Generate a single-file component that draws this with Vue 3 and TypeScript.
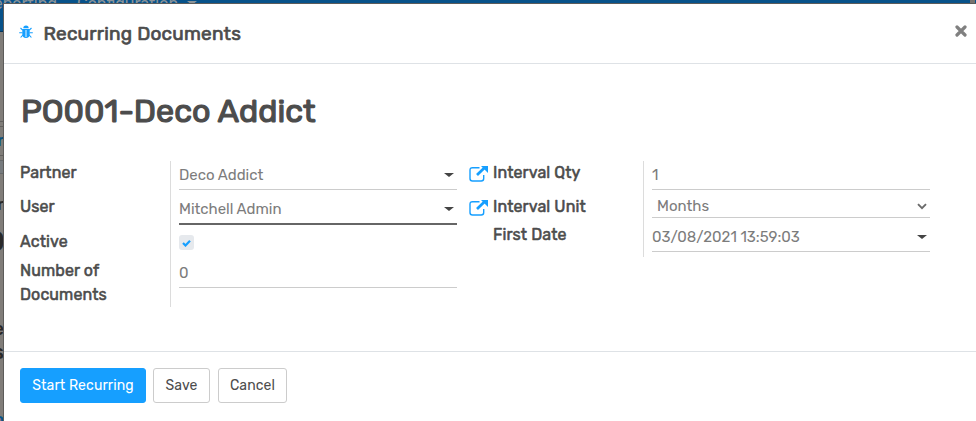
<script setup lang="ts">
import { ref } from 'vue'

const partner = ref('Deco Addict')
const user = ref('Mitchell Admin')
const active = ref(true)
const documents = ref('0')
const intervalQty = ref('1')
const intervalUnit = ref('Months')
const firstDate = ref('03/08/2021 13:59:03')
</script>

<template>
  <div class="screen">
    <div class="backdrop" aria-hidden="true">
      <div class="navbar">
        <span class="nav-a">Reporting</span>
        <span class="nav-b">Configuration</span>
        <i class="nav-caret"></i>
        <i class="nav-avatar"></i>
      </div>
      <i class="rule r1"></i>
      <i class="rule r2"></i>
      <i class="rule r3"></i>
      <i class="band"></i>
      <span class="bit b1">r</span>
      <span class="bit b2">r</span>
      <span class="bit b3">0</span>
      <span class="bit b4">e</span>
      <span class="bit b5">s</span>
      <span class="bit b6">o</span>
    </div>

    <section class="modal">
      <header class="head">
        <svg class="bug" viewBox="0 0 14 14">
          <path d="M4.300 3.200a2.700 2.700 0 0 1 5.400 0z" fill="#169fff" />
          <path d="M3.300 3.900h7.400v5.400c0 2.300-1.300 3.700-3.700 3.700S3.300 11.600 3.300 9.300z" fill="#169fff" />
          <path d="M3.700 5.200 1.500 3M10.300 5.200l2.200-2.200M3.500 7.700H.2M10.500 7.700h3.300M3.800 10.100l-2.200 2.400M10.200 10.100l2.200 2.400" fill="none" stroke="#169fff" stroke-width="1.100" />
          <path d="M7 5v7" stroke="#fff" stroke-width=".9" />
        </svg>
        <h4 class="title">Recurring Documents</h4>
        <svg class="close" viewBox="0 0 12 12"><path d="M2 2l8 8M10 2l-8 8" stroke="#808080" stroke-width="3.200" stroke-linecap="round" /></svg>
      </header>

      <main class="body">
        <h1 class="name">PO001-Deco Addict</h1>
        <div class="groups">
          <div class="group left">
            <div class="row h34">
              <span class="label">Partner</span>
              <div class="cell"><div class="field f29"><span>{{ partner }}</span><i class="caret"></i></div></div>
              <svg class="ext" viewBox="0 0 19 18"><path d="M10.500 2.700H3.500Q1 2.700 1 5.200v8.300Q1 16 3.500 16h8.700q2.500 0 2.500-2.500V10" fill="none" stroke="#169fff" stroke-width="1.400" /><path d="M8 10 15.500 2.700" stroke="#169fff" stroke-width="2.700" /><path d="M12 1H19v7z" fill="#169fff" /></svg>
            </div>
            <div class="row h35">
              <span class="label">User</span>
              <div class="cell"><div class="field f30 focus"><span>{{ user }}</span><i class="caret"></i></div></div>
              <svg class="ext" viewBox="0 0 19 18"><path d="M10.500 2.700H3.500Q1 2.700 1 5.200v8.300Q1 16 3.500 16h8.700q2.500 0 2.500-2.500V10" fill="none" stroke="#169fff" stroke-width="1.400" /><path d="M8 10 15.500 2.700" stroke="#169fff" stroke-width="2.700" /><path d="M12 1H19v7z" fill="#169fff" /></svg>
            </div>
            <div class="row h29">
              <span class="label">Active</span>
              <div class="cell">
                <button class="check" @click="active = !active">
                  <svg v-if="active" viewBox="0 0 9 8"><path d="M1 4l2.500 2.500L8 1.800" fill="none" stroke="#169fff" stroke-width="2.200" /></svg>
                </button>
              </div>
            </div>
            <div class="row h48">
              <span class="label">Number of<br />Documents</span>
              <div class="cell"><div class="field f29"><span>{{ documents }}</span></div></div>
            </div>
          </div>

          <div class="group right">
            <div class="row h34">
              <span class="label">Interval Qty</span>
              <div class="cell"><div class="field f29"><span>{{ intervalQty }}</span></div></div>
            </div>
            <div class="row h28">
              <span class="label">Interval Unit</span>
              <div class="cell"><div class="field f23 select"><span>{{ intervalUnit }}</span><svg class="chev" viewBox="0 0 10 7"><path d="M1 1.200l4 4 4-4" fill="none" stroke="#6b6b6b" stroke-width="1.900" /></svg></div></div>
            </div>
            <div class="row h34">
              <span class="label">First Date</span>
              <div class="cell"><div class="field f29"><span>{{ firstDate }}</span><i class="caret"></i></div></div>
            </div>
          </div>
        </div>
      </main>

      <footer class="foot">
        <button class="btn primary">Start Recurring</button>
        <button class="btn save">Save</button>
        <button class="btn cancel">Cancel</button>
      </footer>
    </section>
  </div>
</template>

<style>
body { margin: 0; overflow: hidden; }
</style>

<style scoped>
* { box-sizing: border-box; }
.screen { position: relative; width: 976px; height: 421px; overflow: hidden; font-family: Rubik, Roboto, sans-serif; background: #807d79; padding: 4px 0 0 4px; }
.backdrop { position: absolute; inset: 0; }
.navbar { position: absolute; left: 0; top: 0; width: 100%; height: 32px; background: #07528a; border-bottom: 1px solid #05365c; color: #8b9499; font-size: 16px; line-height: 18px; }
.nav-a { position: absolute; right: 919px; top: -5px; }
.nav-b { position: absolute; left: 77px; top: -5px; }
.nav-caret { position: absolute; left: 187px; top: 1px; border: 5px solid transparent; border-top: 4px solid #8b9499; border-bottom: 0; }
.nav-avatar { position: absolute; left: 970px; top: 0; width: 5px; height: 3px; background: #78736f; }
.rule { position: absolute; left: 0; width: 4px; height: 1px; background: #62605e; }
.r1 { top: 121px; }
.r2 { top: 126px; }
.r3 { top: 155px; }
.band { position: absolute; left: 0; top: 160px; width: 4px; height: 14px; background: #777b7e; border: solid #66696b; border-width: 1px 0; }
.bit { position: absolute; right: 972px; color: #292929; font-size: 16px; line-height: 20px; font-weight: 500; }
.b1 { top: 131px; color: #0b527f; }
.b2 { top: 195px; }
.b3 { top: 227px; font-size: 28px; line-height: 30px; right: 971px; }
.b4 { top: 319px; font-size: 18px; }
.b5 { top: 342px; font-size: 20px; }
.b6 { top: 410px; color: #07528a; }

.modal { position: relative; display: flex; flex-direction: column; width: 972px; height: 417px; background: #fff; color: #4c4c4c; box-shadow: 0 0 0 1px #5d5c5a; }
.head { display: flex; align-items: center; height: 60px; padding: 0 9px 2px 15px; border-bottom: 1px solid #dee2e6; }
.bug { width: 14px; height: 14px; margin-bottom: 2px; }
.title { margin: 2px 0 0 10.500px; font-size: 19px; line-height: 28px; font-weight: 400; letter-spacing: .22px; -webkit-text-stroke: .7px; white-space: nowrap; }
.close { width: 12px; height: 12px; margin: 0 0 4px auto; }
.body { height: 287px; padding: 26px 16px 0; }
.name { margin: 0 0 0 1px; font-size: 32.300px; line-height: 42px; font-weight: 400; -webkit-text-stroke: 1.200px; white-space: nowrap; }
.groups { display: flex; gap: 4px; margin-top: 29px; align-items: flex-start; }
.group { display: flex; flex-direction: column; }
.left { width: 469px; }
.right { width: 437px; }
.row { display: flex; }
.h34 { height: 34px; }
.h35 { height: 35px; }
.h29 { height: 29px; }
.h28 { height: 28px; }
.h48 { height: 48px; }
.label { width: 150px; font-size: 16px; line-height: 24px; font-weight: 400; letter-spacing: .1px; -webkit-text-stroke: .55px; white-space: nowrap; }
.cell { width: 287px; border-left: 1px solid #dcdcdc; padding-left: 8px; }
.field { display: flex; align-items: center; justify-content: space-between; border-bottom: 1px solid #ccc; color: #7c7c7c; font-size: 15px; font-weight: 400; letter-spacing: -.02px; line-height: 20px; white-space: nowrap; padding-right: 3px; }
.f29 { height: 29px; }
.f30 { height: 30px; }
.f23 { height: 23px; }
.focus { border-bottom: 2px solid #666; }
.select { padding-left: 5px; padding-right: 3px; }
.caret { border: 5px solid transparent; border-top: 4px solid #444; border-bottom: 0; }
.chev { width: 10px; height: 7px; }
.ext { width: 19px; height: 18px; margin: 4px 0 0 12px; flex: none; }
.check { display: flex; align-items: center; justify-content: center; width: 15px; height: 15px; margin-top: 5px; padding: 0; border: 0; border-radius: 3px; background: #e6e9ed; }
.check svg { width: 9px; height: 8px; }
.foot { display: flex; align-items: flex-start; height: 70px; padding: 16px 16px 0; border-top: 1px solid #dee2e6; }
.btn { height: 35px; padding: 1px 0 0; font: 400 14px/20px Rubik, Roboto, sans-serif; letter-spacing: .1px; color: #4c4c4c; background: #fff; border: 1px solid #ccc; border-radius: 3px; white-space: nowrap; }
.primary { width: 126px; color: #fff; background: #169fff; border-color: #169fff; }
.save { width: 57px; margin-left: 7px; }
.cancel { width: 69px; margin-left: 8px; }
</style>
